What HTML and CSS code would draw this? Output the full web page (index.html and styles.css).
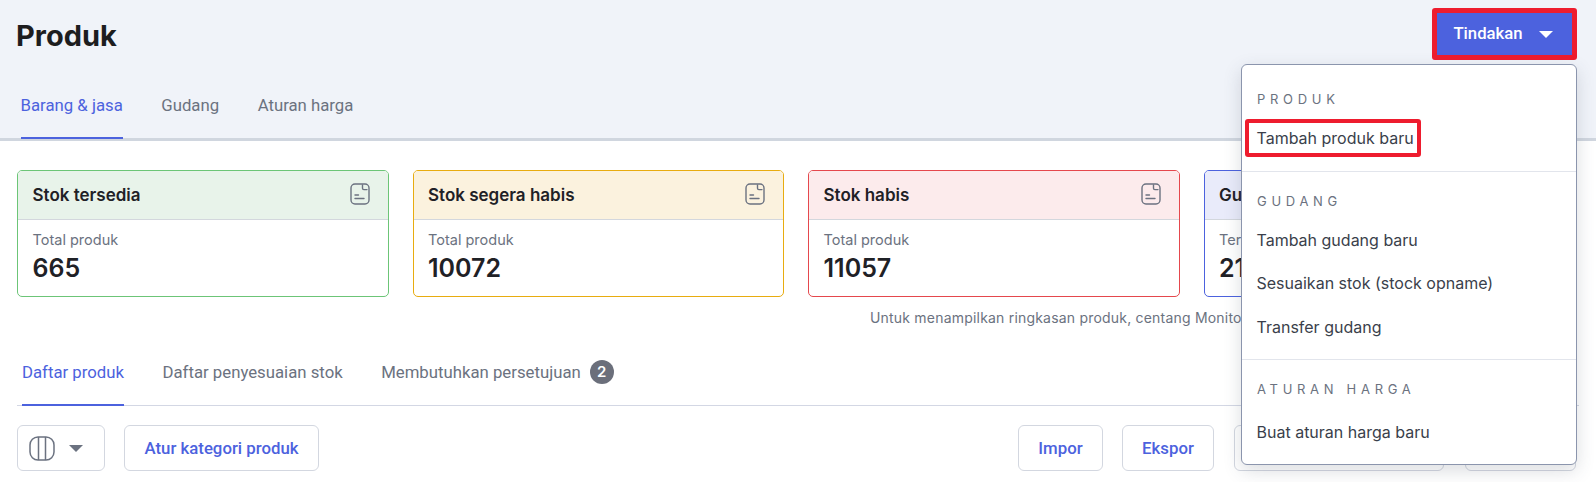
FILE: index.html
```html
<!DOCTYPE html>
<html lang="id">
<head>
<meta charset="utf-8">
<title>Produk</title>
<link rel="stylesheet" href="styles.css">
</head>
<body>
<svg class="defs" width="0" height="0" aria-hidden="true">
  <symbol id="doc" viewBox="0 0 20 22">
    <path d="M5 1h10a4 4 0 0 1 4 4v12a4 4 0 0 1-4 4H5a4 4 0 0 1-4-4V5a4 4 0 0 1 4-4z" fill="none" stroke="currentColor" stroke-width="1.4"/>
    <path d="M12.5 2v3.2a1.4 1.4 0 0 0 1.4 1.4H17M5 12h3.5M5 15.5h9" fill="none" stroke="currentColor" stroke-width="1.4" stroke-linecap="round"/>
  </symbol>
</svg>
<div class="page">
  <header class="top">
    <div class="top-row">
      <h1 class="title">Produk</h1>
      <button class="action marked">Tindakan<span class="caret caret-white"></span></button>
    </div>
    <nav class="tabs tabs-top">
      <a class="tab active">Barang &amp; jasa</a>
      <a class="tab">Gudang</a>
      <a class="tab">Aturan harga</a>
    </nav>
  </header>

  <main class="content">
    <section class="cards">
      <article class="card green">
        <div class="card-head"><span>Stok tersedia</span><svg class="doc"><use href="#doc"/></svg></div>
        <div class="card-body"><div class="label">Total produk</div><div class="value">665</div></div>
      </article>
      <article class="card amber">
        <div class="card-head"><span>Stok segera habis</span><svg class="doc"><use href="#doc"/></svg></div>
        <div class="card-body"><div class="label">Total produk</div><div class="value">10072</div></div>
      </article>
      <article class="card red">
        <div class="card-head"><span>Stok habis</span><svg class="doc"><use href="#doc"/></svg></div>
        <div class="card-body"><div class="label">Total produk</div><div class="value">11057</div></div>
      </article>
      <article class="card blue">
        <div class="card-head"><span>Gudang</span><svg class="doc"><use href="#doc"/></svg></div>
        <div class="card-body"><div class="label">Terdaftar</div><div class="value">21</div></div>
      </article>
    </section>
    <p class="note">Untuk menampilkan ringkasan produk, centang Monitor persediaan barang pada pengaturan produk.</p>

    <nav class="tabs tabs-list">
      <a class="tab active">Daftar produk</a>
      <a class="tab">Daftar penyesuaian stok</a>
      <a class="tab">Membutuhkan persetujuan<span class="badge">2</span></a>
    </nav>

    <div class="toolbar">
      <button class="btn btn-columns">
        <svg class="col-icon" viewBox="0 0 26 25"><rect x="1" y="1" width="24" height="23" rx="8" fill="none" stroke="currentColor" stroke-width="1.5"/><path d="M9.5 1v23M16.5 1v23" fill="none" stroke="currentColor" stroke-width="1.5"/></svg>
        <span class="caret caret-grey"></span>
      </button>
      <button class="btn btn-cat">Atur kategori produk</button>
      <span class="spacer"></span>
      <button class="btn btn-impor">Impor</button>
      <button class="btn btn-ekspor">Ekspor</button>
      <button class="btn btn-hidden-a">Pengaturan</button>
      <button class="btn btn-hidden-b">Lainnya</button>
    </div>
  </main>

  <div class="menu">
    <div class="menu-group">
      <div class="menu-label">PRODUK</div>
      <a class="menu-item marked-item">Tambah produk baru</a>
    </div>
    <div class="menu-group">
      <div class="menu-label">GUDANG</div>
      <a class="menu-item">Tambah gudang baru</a>
      <a class="menu-item">Sesuaikan stok (stock opname)</a>
      <a class="menu-item">Transfer gudang</a>
    </div>
    <div class="menu-group">
      <div class="menu-label">ATURAN HARGA</div>
      <a class="menu-item">Buat aturan harga baru</a>
    </div>
  </div>
</div>
</body>
</html>
```
FILE: styles.css
```css
* { box-sizing: border-box; }
html, body { margin: 0; padding: 0; height: 482px; overflow: hidden; background: #fff; }
body { font-family: "Inter", "Liberation Sans", sans-serif; color: #1f2126; }
.defs { position: absolute; }
.page { position: relative; height: 482px; overflow: hidden; }

.top { height: 141px; background: #f0f3f9; border-bottom: 3px solid #d0d6df; }
.top-row { height: 86px; display: flex; align-items: flex-start; justify-content: space-between; padding: 8px 19px 0 16px; }
.title { margin: 11px 0 0; font: 700 29px/34px "Inter", sans-serif; color: #1d1d1f; }
.action { width: 145px; height: 52px; display: flex; align-items: center; justify-content: center; gap: 16px; background: #4c62de; color: #fff; border: 5px solid #ee1c2e; border-radius: 3px; font: 500 16.7px/20px "Roboto", sans-serif; padding: 0 3px 0 0; }

.caret { display: inline-block; width: 0; height: 0; border-style: solid; border-width: 7.5px 7.5px 0; border-color: #6b7280 transparent transparent; }
.caret-white { border-top-color: #fff; }

.tabs { display: flex; font: 400 16.75px/20px "Roboto", sans-serif; color: #6b7280; }
.tab { display: flex; align-items: center; color: #6b7280; }
.tab.active { color: #4c62de; }
.tabs-top { gap: 38.5px; padding-left: 20.5px; height: 53px; }
.tabs-top .tab { height: 53px; padding-bottom: 14px; border-bottom: 2px solid transparent; }
.tabs-top .tab.active { border-bottom-color: #4c62de; }

.content { padding: 29px 20px 0 17px; }
.cards { display: grid; grid-template-columns: repeat(4, 371.5px); gap: 24px; }
.card { height: 127px; border: 1px solid; border-radius: 5px; overflow: hidden; background: #fff; }
.card-head { height: 49px; padding: 0 18px 0 14.5px; display: flex; align-items: center; justify-content: space-between; font: 600 17px/20px "Inter", sans-serif; color: #1f2126; border-bottom: 1px solid #d3d7dd; }
.doc { width: 20px; height: 22px; color: #6b7280; margin-top: -2px; }
.card-body { padding: 11px 14.5px 0; }
.label { font-size: 14.5px; line-height: 18px; color: #6b7280; }
.value { font-size: 25px; line-height: 30px; font-weight: 600; margin-top: 4px; color: #1f2126; }
.green { border-color: #6cc577; }
.green .card-head { background: #e8f3ea; }
.amber { border-color: #e8ac10; }
.amber .card-head { background: #fbf2de; }
.red { border-color: #e5484d; }
.red .card-head { background: #fcebec; }
.blue { border-color: #4c62de; }
.blue .card-head { background: #e9ebfa; }

.note { margin: 11px 0 0; padding-left: 853px; white-space: nowrap; font-size: 14px; line-height: 20px; color: #6b7280; letter-spacing: .2px; }

.tabs-list { margin-top: 30px; height: 48px; gap: 38.5px; padding-left: 0; border-bottom: 1px solid #d3d7e4; margin-right: -3px; }
.tabs-list .tab { height: 48px; padding: 0 0 18px; border-bottom: 2px solid transparent; }
.tabs-list .tab:first-child { margin-left: 5px; }
.tabs-list .tab.active { border-bottom-color: #4c62de; }
.badge { width: 24px; height: 24px; margin-left: 9px; border-radius: 50%; background: #6b6f7b; color: #fff; font: 600 15px/24px "Inter", sans-serif; display: flex; align-items: center; justify-content: center; }

.toolbar { display: flex; gap: 19px; margin-top: 19px; }
.spacer { flex: 1; }
.btn { height: 46px; border: 1px solid #d3d7e0; border-radius: 6px; background: #fff; color: #4c62de; font: 500 16.8px/20px "Roboto", sans-serif; padding: 0; display: flex; align-items: center; justify-content: center; }
.btn-columns { width: 88px; gap: 14px; color: #6b7280; justify-content: flex-start; padding-left: 10.5px; }
.col-icon { width: 26px; height: 25px; }
.btn-cat { width: 195px; }
.btn-impor { width: 85px; }
.btn-ekspor { width: 92px; }
.btn-hidden-a { width: 210px; margin-left: 1px; }
.btn-hidden-b { width: 111px; margin-left: 2px; }

.menu { position: absolute; left: 1241px; top: 64px; width: 336px; height: 401px; background: #fff; border: 1px solid #8b95ad; border-radius: 6px; box-shadow: 0 6px 18px rgba(60, 70, 90, .18); }
.menu-group { border-bottom: 1px solid #e2e5ec; }
.menu-group:nth-child(1) { height: 107px; padding-top: 24px; }
.menu-group:nth-child(2) { height: 188px; padding-top: 19px; }
.menu-group:nth-child(3) { border-bottom: 0; padding-top: 19px; }
.menu-label { padding-left: 15px; font-size: 13px; line-height: 20px; letter-spacing: 4.7px; color: #6b7280; }
.menu-item { display: flex; align-items: center; height: 43.5px; padding-left: 14.5px; font-size: 16px; color: #3a3f4b; }
.menu-group:nth-child(1) .menu-item { height: 38px; margin-top: 10px; }
.menu-group:nth-child(2) .menu-label { margin-bottom: 7px; }
.menu-group:nth-child(3) .menu-label { margin-bottom: 11px; }
.marked-item { width: 176px; margin-left: 3px; padding-left: 7.5px !important; border: 4px solid #ee1c2e; border-radius: 3px; }
```
